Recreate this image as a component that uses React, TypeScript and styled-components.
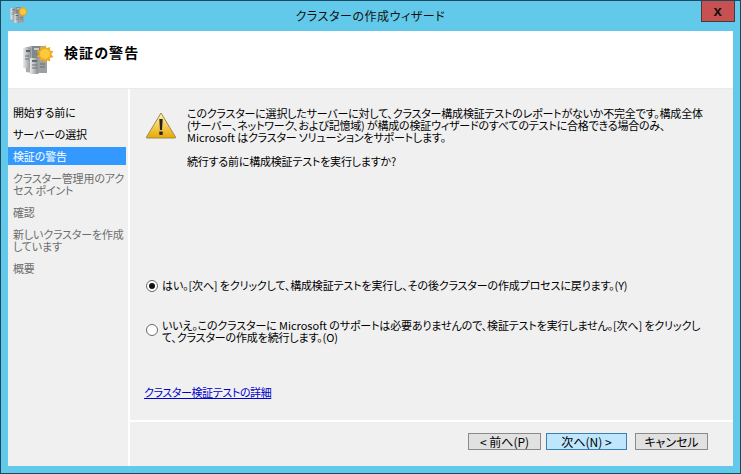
import React from 'react';
import styled, { createGlobalStyle } from 'styled-components';

const Global = createGlobalStyle`
  html, body { margin: 0; padding: 0; background: #62c9ea; }
  #root { width: 741px; height: 474px; overflow: hidden; }
  * { box-sizing: border-box; }
`;
const font = `"Noto Sans CJK JP", "Liberation Sans", sans-serif`;

const Frame = styled.div`
  width: 741px; height: 474px; background: #62c9ea;
  border: 1px solid #1c4a63; display: flex; flex-direction: column;
  font-family: ${font}; font-size: 12px; color: #000; position: relative;
  font-feature-settings: "palt";
`;
const TitleBar = styled.div`
  height: 30px; display: flex; align-items: center; justify-content: center;
  position: relative; font-size: 12px; color: #111; padding-bottom: 1px; letter-spacing: 0.55px;
`;
const TitleIcon = styled.div` position: absolute; left: 9px; top: 5px; width: 18px; height: 18px; `;
const Close = styled.div`
  position: absolute; right: 5px; top: 0; width: 34px; height: 21px; background: #c75050;
  border: 1px solid #4a3a3a; border-top: none; display: flex; align-items: center; justify-content: center;
  font-family: "Liberation Sans", sans-serif; font-weight: 700; font-size: 15px; line-height: 1; padding-bottom: 2px;
`;
const Client = styled.div`
  margin: 0 7px 7px 7px; flex: 1; display: flex; flex-direction: column; background: #fff; min-height: 0;
`;
const Header = styled.div`
  height: 58px; background: #fff; display: flex; border-bottom: 1px solid #eaeaea; flex-shrink: 0;
`;
const HeaderIcon = styled.div` width: 56px; padding: 13px 0 0 14px; `;
const HeaderTitle = styled.div`
  font-size: 14px; font-weight: 700; line-height: 18px; padding-top: 12px; letter-spacing: 1.1px;
`;
const Body = styled.div` flex: 1; display: flex; min-height: 0; `;
const Side = styled.div`
  width: 120px; background: #f0f0f0; padding-top: 14px; flex-shrink: 0; margin-right: 2px;
`;
const Step = styled.div<{ $state: 'done' | 'active' | 'todo' }>`
  font-size: 11px; line-height: 12px; padding: 3px 0 3px 5px; margin-bottom: 4px;
  width: 118px; white-space: nowrap; letter-spacing: -0.15px;
  background: ${p => (p.$state === 'active' ? '#3399ff' : 'transparent')};
  color: ${p => (p.$state === 'active' ? '#fff' : p.$state === 'done' ? '#000' : '#6d6d6d')};
`;
const Main = styled.div` flex: 1; display: flex; flex-direction: column; background: #f0f0f0; min-width: 0; `;
const Content = styled.div` height: 333px; flex-shrink: 0; padding: 18px 0 0 15px; border-bottom: 2px solid #fff; display: flex; flex-direction: column; `;
const Warn = styled.div` display: flex; gap: 10px; height: 172px; `;
const WarnSlot = styled.div` width: 32px; height: 27px; flex-shrink: 0; margin-top: 5px; `;
const WarnText = styled.div` font-size: 11px; line-height: 12px; white-space: nowrap; letter-spacing: -0.2px; `;
const Gap = styled.div` height: 12px; `;
const Latin = styled.span` letter-spacing: 0; `;
const RadioRow = styled.div<{ $h: number }>`
  display: flex; align-items: flex-start; gap: 4px; height: ${p => p.$h}px; margin-left: 1px;
`;
const RadioDot = styled.div<{ $on?: boolean; $top: number }>`
  width: 12px; height: 12px; border-radius: 50%; border: 1px solid #6a6a6a; background: #fff; flex-shrink: 0;
  margin-top: ${p => p.$top}px; display: flex; align-items: center; justify-content: center;
  &::after { content: ''; width: 6px; height: 6px; border-radius: 50%; background: ${p => (p.$on ? '#111' : 'transparent')}; }
`;
const RadioText = styled.div` font-size: 11px; line-height: 12px; white-space: nowrap; letter-spacing: -0.15px; `;
const DetailLink = styled.a`
  color: #0000cc; text-decoration: underline; font-size: 11px; line-height: 13px; margin-left: -1px; letter-spacing: -0.4px;
`;
const Footer = styled.div`
  flex: 1; display: flex; justify-content: flex-end; align-items: flex-start; padding: 11px 25px 0 0;
`;
const Btn = styled.div<{ $w: number; $on?: boolean; $gap: number }>`
  width: ${p => p.$w}px; height: 17px; font-size: 12px; line-height: 15px; text-align: center;
  margin-right: ${p => p.$gap}px;
  background: ${p => (p.$on ? '#bee6fd' : '#e1e1e1')};
  border: 1px solid ${p => (p.$on ? '#3c7fb1' : '#8a8a8a')};
`;

const ServerIcon = ({ s, id }: { s: number; id: string }) => (
  <svg width={s} height={s} viewBox="0 0 32 32">
    <defs>
      <linearGradient id={id} x1="0" x2="1"><stop offset="0" stopColor="#ececec" /><stop offset="1" stopColor="#8a8f92" /></linearGradient>
    </defs>
    <path d="M2 4 L9 2 L24 2 L24 22 L16 30 L4 28Z" fill="#a7acaf" />
    <rect x="1" y="4" width="8" height="20" fill={`url(#${id})`} />
    <rect x="10" y="2" width="9" height="12" fill="#7f888c" />
    <rect x="4" y="6" width="4" height="2" fill="#5f666a" />
    <rect x="12" y="4" width="5" height="2" fill="#c8cdd0" />
    <rect x="8" y="14" width="8" height="16" fill={`url(#${id})`} />
    <rect x="16" y="12" width="9" height="17" fill="#9aa0a3" />
    <rect x="18" y="14" width="5" height="2" fill="#e4e6e8" />
    <rect x="10" y="16" width="5" height="2" fill="#656c70" />
    <path d="M10 21h5M10 24h5M18 20h5M18 23h5M3 12h4M3 15h4" stroke="#666" strokeWidth="0.9" />
    <path d="M23 1l1.800 3.200 3.400-1.300-.4 3.600 3.700.8-2.300 2.900 2.300 2.900-3.700.8.4 3.600-3.400-1.300L23 19l-1.800-3.200-3.400 1.300.4-3.600-3.700-.8 2.300-2.900-2.300-2.900 3.700-.8-.4-3.600 3.400 1.300z" fill="#f0a81c" />
    <circle cx="23" cy="10" r="5" fill="#fbcb3f" />
  </svg>
);
const WarnIcon = () => (
  <svg width="32" height="27" viewBox="0 0 32 27">
    <defs>
      <linearGradient id="wg" x1="0" y1="0" x2="0" y2="1"><stop offset="0" stopColor="#fff4b0" /><stop offset="1" stopColor="#e8a900" /></linearGradient>
    </defs>
    <path d="M16 1 L30.500 25 Q31 26 30 26 L2 26 Q1 26 1.500 25Z" fill="url(#wg)" stroke="#9c8a55" strokeWidth="1" />
    <path d="M14.300 7h3.400l-.7 11h-2z" fill="#222" />
    <rect x="14.300" y="19.500" width="3.400" height="3.400" fill="#222" />
  </svg>
);

export default function App() {
  return (
    <>
      <Global />
      <Frame>
        <TitleBar>
          <TitleIcon><ServerIcon s={18} id="a" /></TitleIcon>
          クラスターの作成ウィザード
          <Close>x</Close>
        </TitleBar>
        <Client>
          <Header>
            <HeaderIcon><ServerIcon s={32} id="b" /></HeaderIcon>
            <HeaderTitle>検証の警告</HeaderTitle>
          </Header>
          <Body>
            <Side>
              <Step $state="done">開始する前に</Step>
              <Step $state="done">サーバーの選択</Step>
              <Step $state="active">検証の警告</Step>
              <Step $state="todo">クラスター管理用のアク<br />セス ポイント</Step>
              <Step $state="todo">確認</Step>
              <Step $state="todo">新しいクラスターを作成<br />しています</Step>
              <Step $state="todo">概要</Step>
            </Side>
            <Main>
              <Content>
                <Warn>
                  <WarnSlot><WarnIcon /></WarnSlot>
                  <WarnText>
                    このクラスターに選択したサーバーに対して、クラスター構成検証テストのレポートがないか不完全です。構成全体<br />
                    (サーバー、ネットワーク、および記憶域) が構成の検証ウィザードのすべてのテストに合格できる場合のみ、<br />
                    <Latin>Microsoft</Latin> はクラスター ソリューションをサポートします。
                    <Gap />
                    続行する前に構成検証テストを実行しますか?
                  </WarnText>
                </Warn>
                <RadioRow $h={40}>
                  <RadioDot $on $top={1} />
                  <RadioText>はい。[次へ] をクリックして、構成検証テストを実行し、その後クラスターの作成プロセスに戻ります。(Y)</RadioText>
                </RadioRow>
                <RadioRow $h={67}>
                  <RadioDot $top={5} />
                  <RadioText>いいえ。このクラスターに <Latin>Microsoft</Latin> のサポートは必要ありませんので、検証テストを実行しません。[次へ] をクリックし<br />て、クラスターの作成を続行します。(O)</RadioText>
                </RadioRow>
                <DetailLink href="#">クラスター検証テストの詳細</DetailLink>
              </Content>
              <Footer>
                <Btn $w={73} $gap={5}>&lt; 前へ(P)</Btn>
                <Btn $w={81} $on $gap={8}>次へ(N) &gt;</Btn>
                <Btn $w={73} $gap={0}>キャンセル</Btn>
              </Footer>
            </Main>
          </Body>
        </Client>
      </Frame>
    </>
  );
}
